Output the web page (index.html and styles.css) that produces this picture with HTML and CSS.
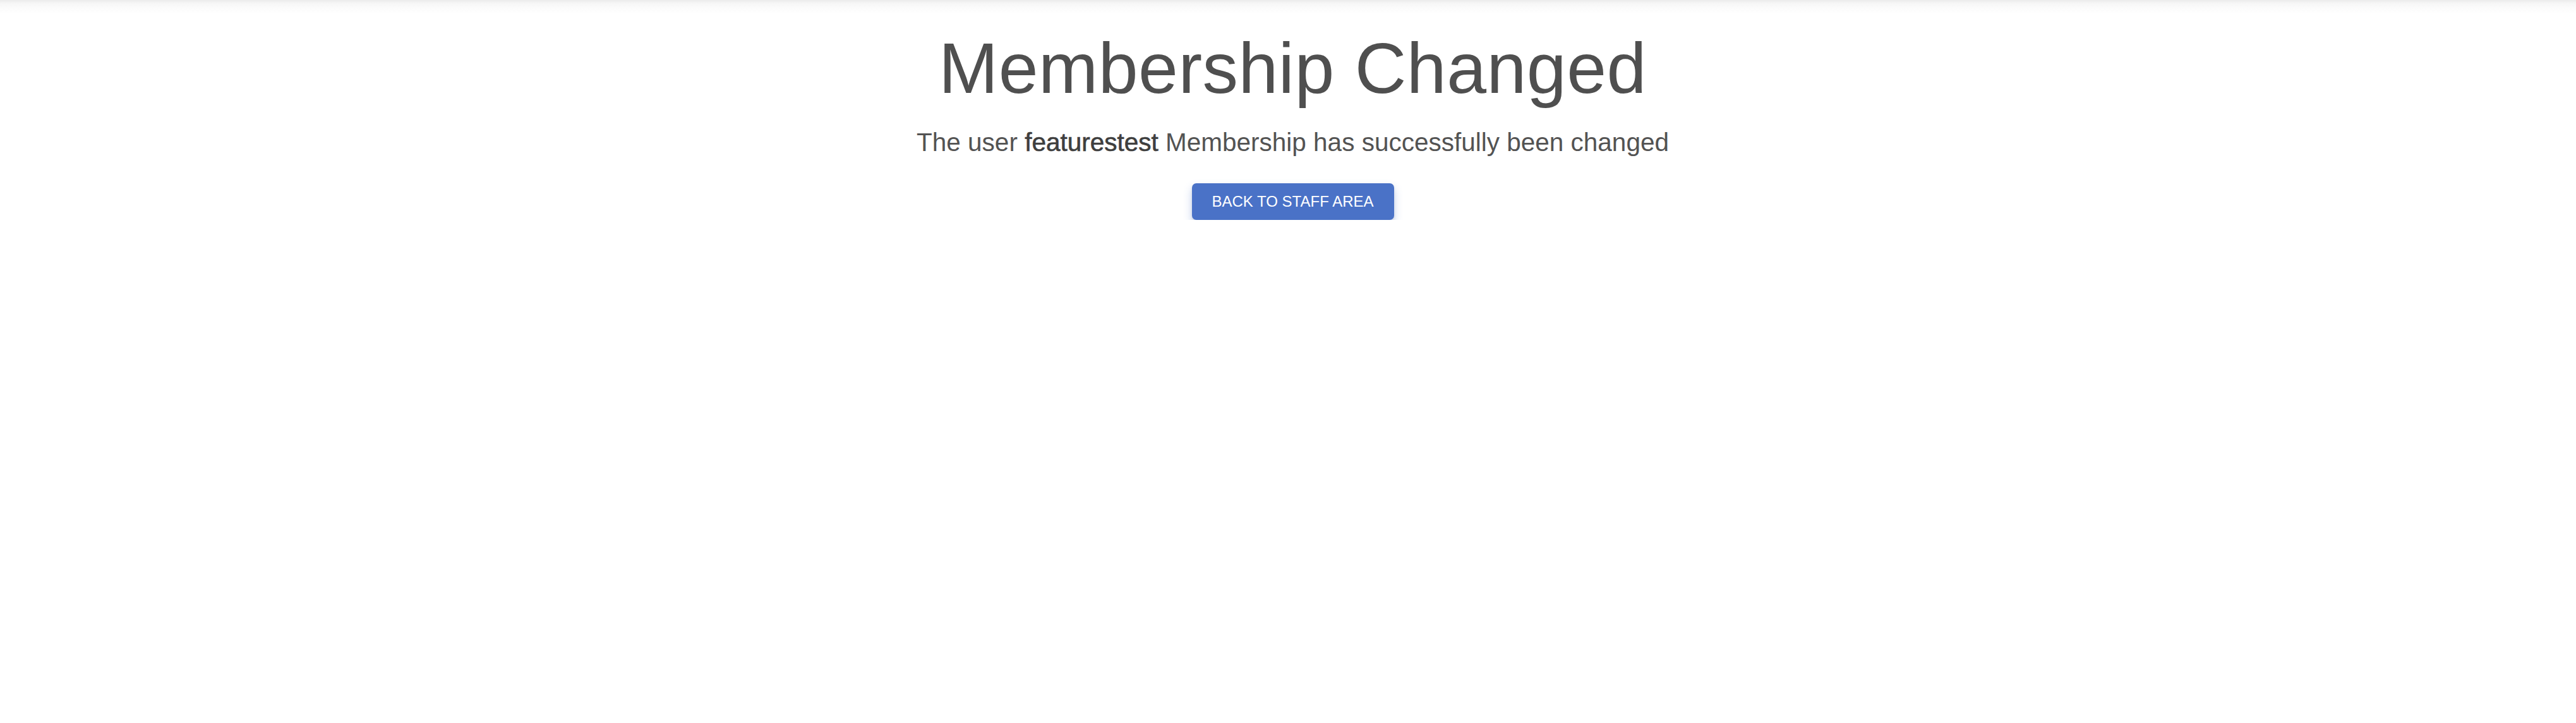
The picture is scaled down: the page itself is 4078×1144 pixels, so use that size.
FILE: index.html
```html
<!DOCTYPE html>
<html lang="en">
<head>
<meta charset="utf-8">
<title>Membership Changed</title>
<link rel="stylesheet" href="styles.css">
</head>
<body>
<div class="topbar"></div>
<main class="content">
  <h1 class="title">Membership Changed</h1>
  <p class="message">The user <strong class="username">featurestest</strong> Membership has successfully been changed</p>
  <a class="btn" href="#">BACK TO STAFF AREA</a>
</main>
</body>
</html>
```
FILE: styles.css
```css
html, body {
  margin: 0;
  padding: 0;
  background: #ffffff;
}
body {
  font-family: "Liberation Sans", Arial, Helvetica, sans-serif;
  color: #505050;
}
.topbar {
  height: 22px;
  background: linear-gradient(to bottom, #ebebeb 0px, #f6f6f6 5px, #fbfbfb 12px, #ffffff 22px);
}
.content {
  display: flex;
  flex-direction: column;
  align-items: center;
  padding-left: 15px;
}
.title {
  margin: 22px 0 0 0;
  font-size: 113px;
  line-height: 1.15;
  font-weight: 300;
  color: #4f4f4f;
  letter-spacing: 0.5px;
}
.message {
  margin: 28px 0 0 0;
  font-size: 40.5px;
  line-height: 1.15;
  color: #535353;
}
.username {
  font-weight: 400;
  color: #3e3e3e;
  -webkit-text-stroke: 0.6px #3e3e3e;
}
.btn {
  margin-top: 41px;
  display: flex;
  align-items: center;
  justify-content: center;
  width: 320px;
  height: 58px;
  box-sizing: border-box;
  background: #4a72c7;
  color: #ffffff;
  font-size: 24px;
  text-decoration: none;
  border-radius: 7px;
  box-shadow: 0 7px 14px rgba(74, 114, 199, 0.32), 0 2px 4px rgba(0, 0, 0, 0.08);
}
```
